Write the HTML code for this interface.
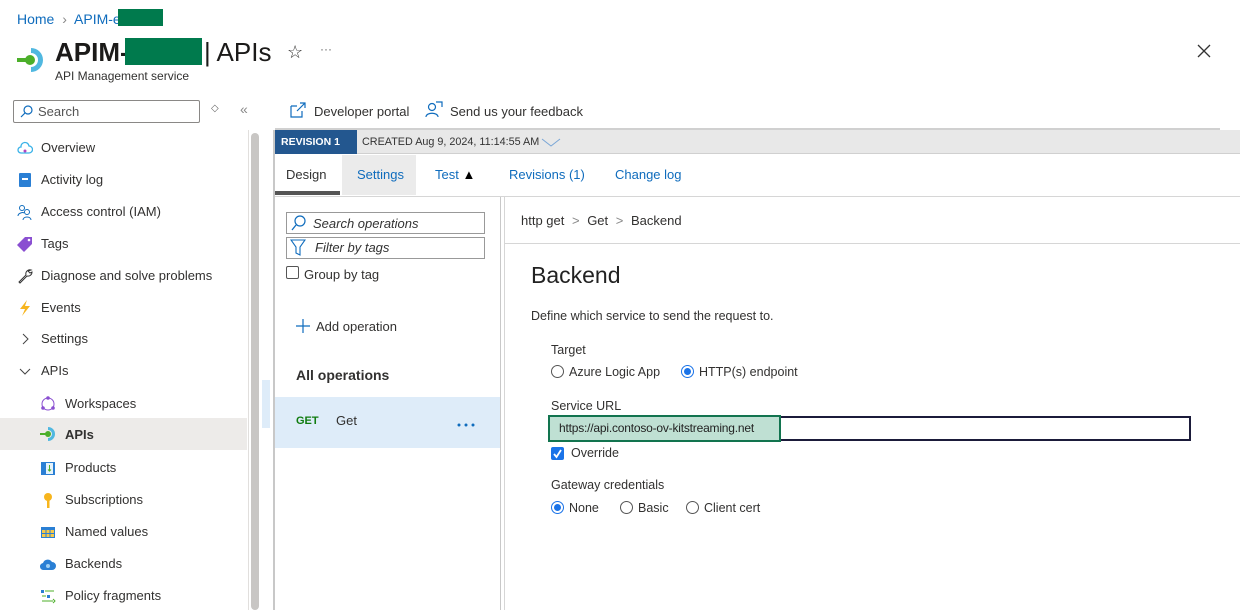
<!DOCTYPE html>
<html><head><meta charset="utf-8">
<style>
*{box-sizing:border-box;margin:0;padding:0}
body{width:1240px;height:610px;overflow:hidden;background:#fff;font-family:"Liberation Sans",sans-serif;color:#323130;position:relative;font-size:13px}
.a{position:absolute;white-space:nowrap}
.blue{color:#0f6cbd}
.nav{position:absolute;left:0;width:247px;height:32px;line-height:32px;font-size:13px}
.nav .ic{position:absolute;left:17px;top:8px;width:16px;height:16px}
.nav span{position:absolute;left:41px}
.nav.sub .ic{left:40px}
.nav.sub span{left:65px}
.radio{display:inline-block;width:13px;height:13px;border:1px solid #555;border-radius:50%;vertical-align:-2px;margin-right:5px;position:relative;background:#fff}
.radio.on{border-color:#1a73e8}
.radio.on:after{content:"";position:absolute;left:2px;top:2px;width:7px;height:7px;border-radius:50%;background:#1a73e8}
</style></head><body>
<div class="a blue" style="left:17px;top:11px;font-size:14px">Home <span style="color:#888;margin:0 4px">›</span> APIM-e</div>
<div class="a" style="left:118px;top:9px;width:45px;height:17px;background:#007a4d"></div>
<svg class="a" style="left:15px;top:44px" width="32" height="32" viewBox="0 0 32 32"><path d="M16 4 A12 12 0 0 1 16 28 L16 23 A7 7 0 0 0 16 9Z" fill="#50b8e0"/><circle cx="15" cy="16" r="5" fill="#4caf2a"/><rect x="2" y="14" width="10" height="4" fill="#4caf2a"/></svg>
<div class="a" style="left:55px;top:37px;font-size:26px;font-weight:bold;color:#1b1a19">APIM-</div>
<div class="a" style="left:125px;top:38px;width:77px;height:27px;background:#007a4d"></div>
<div class="a" style="left:204px;top:37px;font-size:26px;color:#1b1a19">| APIs</div>
<div class="a" style="left:287px;top:42px;font-size:18px">☆</div>
<div class="a" style="left:320px;top:42px;font-size:12px;color:#666">···</div>
<div class="a" style="left:55px;top:69px;font-size:12px">API Management service</div>
<svg class="a" style="left:1197px;top:44px" width="14" height="14"><path d="M1 1L13 13M13 1L1 13" stroke="#333" stroke-width="1.3"/></svg>
<div class="a" style="left:13px;top:100px;width:187px;height:23px;border:1px solid #8a8886;border-radius:2px"></div>
<svg class="a" style="left:20px;top:105px" width="13" height="13"><circle cx="8" cy="5" r="4" fill="none" stroke="#0f6cbd" stroke-width="1.2"/><path d="M5 8L1 12" stroke="#0f6cbd" stroke-width="1.2"/></svg>
<div class="a" style="left:38px;top:104px;font-size:13px;color:#555">Search</div>
<div class="a" style="left:211px;top:103px;font-size:10px;color:#666">◇</div>
<div class="a" style="left:240px;top:101px;font-size:14px;color:#888">«</div>
<svg class="a" style="left:289px;top:101px" width="18" height="18"><path d="M2 5H8M2 5V16H13V10" fill="none" stroke="#0f6cbd" stroke-width="1.2"/><path d="M8 10L16 2M11 2H16V7" fill="none" stroke="#0f6cbd" stroke-width="1.2"/></svg>
<div class="a" style="left:314px;top:104px;font-size:13px">Developer portal</div>
<svg class="a" style="left:425px;top:101px" width="18" height="18"><circle cx="7" cy="6" r="3.5" fill="none" stroke="#0f6cbd" stroke-width="1.2"/><path d="M1 16C1 11 13 11 13 16" fill="none" stroke="#0f6cbd" stroke-width="1.2"/><path d="M11 1H17V6" fill="none" stroke="#0f6cbd" stroke-width="1.2"/></svg>
<div class="a" style="left:450px;top:104px;font-size:13px">Send us your feedback</div>
<div class="nav" style="top:132px"><svg class="ic" viewBox="0 0 16 16"><path d="M4 13A3 3 0 0 1 4 7A4 4 0 0 1 12 6A3 3 0 0 1 12 13Z" fill="none" stroke="#3ab2e8" stroke-width="1.3"/><circle cx="8" cy="11" r="1.5" fill="#b146c2"/></svg><span>Overview</span></div>
<div class="nav" style="top:164px"><svg class="ic" viewBox="0 0 16 16"><rect x="2" y="1" width="12" height="14" rx="1" fill="#2a7fd4"/><rect x="5" y="6" width="6" height="2" fill="#fff"/></svg><span>Activity log</span></div>
<div class="nav" style="top:196px"><svg class="ic" viewBox="0 0 16 16"><circle cx="5" cy="4" r="2.5" fill="none" stroke="#0f6cbd"/><circle cx="10" cy="8" r="2.5" fill="none" stroke="#0f6cbd"/><path d="M1 12C1 9 6 8 7 9M6 16C6 12 14 12 14 16" fill="none" stroke="#0f6cbd"/></svg><span>Access control (IAM)</span></div>
<div class="nav" style="top:228px"><svg class="ic" viewBox="0 0 16 16"><path d="M8 1L15 1L15 8L7 16L0 9Z" fill="#8a4fd1"/><circle cx="12" cy="4" r="1.3" fill="#fff"/></svg><span>Tags</span></div>
<div class="nav" style="top:260px"><svg class="ic" viewBox="0 0 16 16"><path d="M14 2A4 4 0 0 0 9 7L2 14L3 15L10 8A4 4 0 0 0 15 4L13 5L11 3Z" fill="none" stroke="#333" stroke-width="1"/></svg><span>Diagnose and solve problems</span></div>
<div class="nav" style="top:292px"><svg class="ic" viewBox="0 0 16 16"><path d="M10 0L3 9H8L5 16L13 6H8Z" fill="#f7b51d"/></svg><span>Events</span></div>
<div class="nav" style="top:323px"><svg class="ic" viewBox="0 0 16 16"><path d="M6 3L11 8L6 13" fill="none" stroke="#444"/></svg><span>Settings</span></div>
<div class="nav" style="top:355px"><svg class="ic" viewBox="0 0 16 16"><path d="M3 6L8 11L13 6" fill="none" stroke="#444"/></svg><span>APIs</span></div>
<div class="nav sub" style="top:388px"><svg class="ic" viewBox="0 0 16 16"><circle cx="8" cy="8" r="6" fill="none" stroke="#8a4fd1"/><circle cx="8" cy="2" r="1.8" fill="#8a4fd1"/><circle cx="3" cy="12" r="1.8" fill="#8a4fd1"/><circle cx="13" cy="12" r="1.8" fill="#8a4fd1"/></svg><span>Workspaces</span></div>
<div class="nav sub" style="top:418px;background:#edebe9;font-weight:bold;line-height:34px"><svg class="ic" viewBox="0 0 16 16"><path d="M8 1A7 7 0 0 1 8 15L8 12A4 4 0 0 0 8 4Z" fill="#50b8e0"/><circle cx="8" cy="8" r="3" fill="#4caf2a"/><rect x="0" y="7" width="6" height="2" fill="#4caf2a"/></svg><span>APIs</span></div>
<div class="nav sub" style="top:452px"><svg class="ic" viewBox="0 0 16 16"><rect x="1" y="2" width="14" height="13" fill="#2a7fd4"/><rect x="6" y="3" width="7" height="11" fill="#e6f3fb"/><path d="M9.5 5V11M8 9.5L9.5 11L11 9.5" stroke="#4caf2a" fill="none"/></svg><span>Products</span></div>
<div class="nav sub" style="top:484px"><svg class="ic" viewBox="0 0 16 16"><circle cx="8" cy="5" r="4" fill="#f7b51d"/><rect x="7" y="8" width="2.5" height="8" fill="#f7b51d"/></svg><span>Subscriptions</span></div>
<div class="nav sub" style="top:516px"><svg class="ic" viewBox="0 0 16 16"><rect x="1" y="3" width="14" height="11" fill="#2a7fd4"/><rect x="2" y="6" width="12" height="7" fill="#f7c948"/><path d="M6 6V13M10 6V13M2 9.5H14" stroke="#2a7fd4"/></svg><span>Named values</span></div>
<div class="nav sub" style="top:548px"><svg class="ic" viewBox="0 0 16 16"><path d="M4 14A3.5 3.5 0 0 1 3 7A5 5 0 0 1 12 6A4 4 0 0 1 12 14Z" fill="#2a7fd4"/><circle cx="8" cy="10" r="2" fill="#9fd0f5"/></svg><span>Backends</span></div>
<div class="nav sub" style="top:580px"><svg class="ic" viewBox="0 0 16 16"><rect x="1" y="2" width="3" height="3" fill="#2a7fd4"/><rect x="7" y="7" width="3" height="3" fill="#2a7fd4"/><path d="M5 3H14M2 8H6M2 13H13M13 11L15 13L13 15" stroke="#4caf2a" fill="none"/></svg><span>Policy fragments</span></div>
<div class="a" style="left:248px;top:130px;width:12px;height:480px;background:#fff;border-left:1px solid #e1dfdd"></div>
<div class="a" style="left:251px;top:133px;width:8px;height:477px;background:#c8c6c4;border-radius:4px"></div>
<div class="a" style="left:262px;top:380px;width:8px;height:48px;background:#deecf9"></div>
<div class="a" style="left:275px;top:128px;width:945px;height:2px;background:#d0d0d0"></div>
<div class="a" style="left:273px;top:130px;width:2px;height:480px;background:#c8c8c8"></div>
<div class="a" style="left:275px;top:130px;width:965px;height:24px;background:#e8e8e8;border-bottom:1px solid #d0d0d0"></div>
<div class="a" style="left:275px;top:130px;width:82px;height:24px;background:#23578f;color:#fff;font-weight:bold;font-size:10.5px;line-height:24px;padding-left:6px">REVISION 1</div>
<div class="a" style="left:362px;top:136px;font-size:10.8px;color:#333">CREATED Aug 9, 2024, 11:14:55 AM</div>
<svg class="a" style="left:541px;top:138px" width="20" height="10"><path d="M1 1L10 8L19 1" fill="none" stroke="#7aa6d6"/></svg>
<div class="a" style="left:342px;top:155px;width:74px;height:40px;background:#ebebeb"></div>
<div class="a" style="left:286px;top:167px;font-size:13px;color:#333">Design</div>
<div class="a" style="left:275px;top:191px;width:65px;height:4px;background:#555"></div>
<div class="a blue" style="left:357px;top:167px;font-size:13px">Settings</div>
<div class="a blue" style="left:435px;top:167px;font-size:13px">Test <span style="color:#000">▲</span></div>
<div class="a blue" style="left:509px;top:167px;font-size:13px">Revisions (1)</div>
<div class="a blue" style="left:615px;top:167px;font-size:13px">Change log</div>
<div class="a" style="left:275px;top:196px;width:965px;height:1px;background:#d6d6d6"></div>
<div class="a" style="left:500px;top:197px;width:1px;height:413px;background:#c8c8c8"></div>
<div class="a" style="left:504px;top:197px;width:1px;height:413px;background:#d6d6d6"></div>
<div class="a" style="left:286px;top:212px;width:199px;height:22px;border:1px solid #999"></div>
<svg class="a" style="left:290px;top:214px" width="18" height="18"><circle cx="10" cy="7" r="5" fill="none" stroke="#0f6cbd" stroke-width="1.2"/><path d="M6 11L2 16" stroke="#0f6cbd" stroke-width="1.3"/></svg>
<div class="a" style="left:313px;top:216px;font-size:13px;font-style:italic;color:#333">Search operations</div>
<div class="a" style="left:286px;top:237px;width:199px;height:22px;border:1px solid #999"></div>
<svg class="a" style="left:290px;top:239px" width="16" height="17"><path d="M1 1H15L10 8V16L6 14V8Z" fill="none" stroke="#0f6cbd" stroke-width="1.1"/></svg>
<div class="a" style="left:315px;top:240px;font-size:13px;font-style:italic;color:#333">Filter by tags</div>
<div class="a" style="left:286px;top:266px;width:13px;height:13px;border:1px solid #555;border-radius:2px"></div>
<div class="a" style="left:304px;top:267px;font-size:13px">Group by tag</div>
<svg class="a" style="left:295px;top:318px" width="16" height="16"><path d="M8 1V15M1 8H15" stroke="#0f6cbd" stroke-width="1.2"/></svg>
<div class="a" style="left:316px;top:319px;font-size:13px">Add operation</div>
<div class="a" style="left:296px;top:367px;font-size:14px;font-weight:bold">All operations</div>
<div class="a" style="left:275px;top:397px;width:225px;height:51px;background:#deecf9"></div>
<div class="a" style="left:296px;top:415px;font-size:11px;font-weight:bold;color:#107c10">GET</div>
<div class="a" style="left:336px;top:413px;font-size:13px">Get</div>
<svg class="a" style="left:457px;top:422px" width="18" height="6"><circle cx="2" cy="3" r="1.5" fill="#0f6cbd"/><circle cx="9" cy="3" r="1.5" fill="#0f6cbd"/><circle cx="16" cy="3" r="1.5" fill="#0f6cbd"/></svg>
<div class="a" style="left:521px;top:213px;font-size:13px">http get <span style="color:#888;margin:0 4px">&gt;</span> Get <span style="color:#888;margin:0 4px">&gt;</span> Backend</div>
<div class="a" style="left:505px;top:243px;width:735px;height:1px;background:#d6d6d6"></div>
<div class="a" style="left:531px;top:262px;font-size:23px;color:#222">Backend</div>
<div class="a" style="left:531px;top:309px;font-size:12.5px">Define which service to send the request to.</div>
<div class="a" style="left:551px;top:343px;font-size:12.5px">Target</div>
<div class="a" style="left:551px;top:365px;font-size:12.5px"><span class="radio"></span>Azure Logic App</div>
<div class="a" style="left:681px;top:365px;font-size:12.5px"><span class="radio on"></span>HTTP(s) endpoint</div>
<div class="a" style="left:551px;top:399px;font-size:12.5px">Service URL</div>
<div class="a" style="left:549px;top:416px;width:642px;height:25px;border:2px solid #1b1b3a;border-left:none"></div>
<div class="a" style="left:548px;top:415px;width:233px;height:27px;background:#bfe0d3;border:2px solid #12744f;font-size:12px;line-height:23px;padding-left:9px;color:#222;letter-spacing:-0.2px">https://api.contoso-ov-kitstreaming.net</div>
<div class="a" style="left:551px;top:447px;width:13px;height:13px;background:#1a73e8;border-radius:2px"></div>
<svg class="a" style="left:551px;top:447px" width="13" height="13"><path d="M3 7L5.5 10L10 3" stroke="#fff" stroke-width="1.8" fill="none"/></svg>
<div class="a" style="left:571px;top:446px;font-size:12.5px">Override</div>
<div class="a" style="left:551px;top:478px;font-size:12.5px">Gateway credentials</div>
<div class="a" style="left:551px;top:501px;font-size:12.5px"><span class="radio on"></span>None</div>
<div class="a" style="left:620px;top:501px;font-size:12.5px"><span class="radio"></span>Basic</div>
<div class="a" style="left:686px;top:501px;font-size:12.5px"><span class="radio"></span>Client cert</div>
</body></html>
